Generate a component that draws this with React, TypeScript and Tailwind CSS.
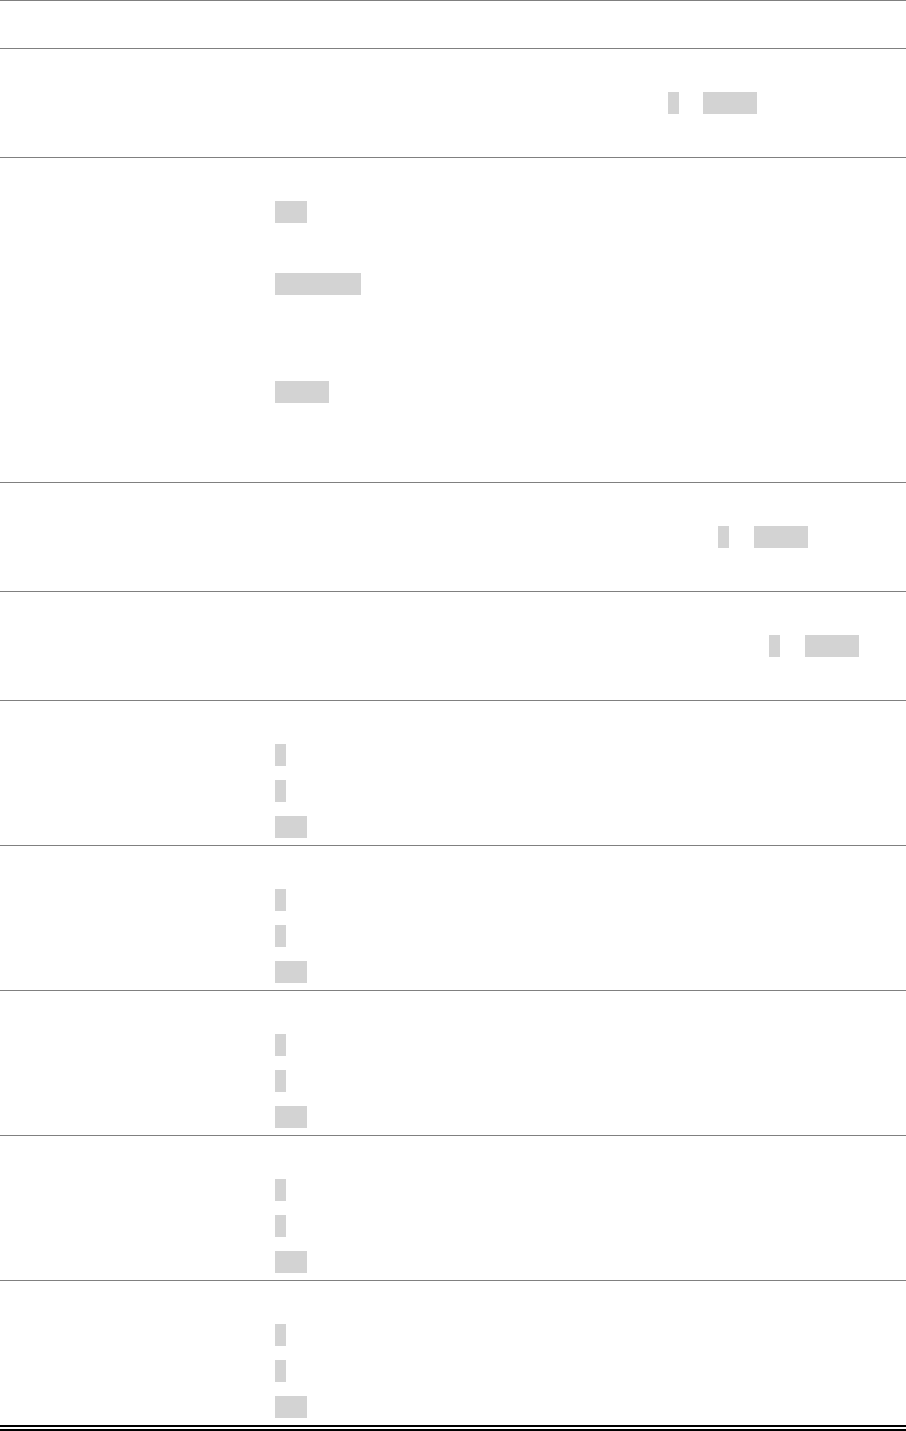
import React from 'react';

// Gray inline code chip; the glyphs inside are rendered transparent, as in the reference
function Chip({ text, width, offset = 0 }: { text: string; width: number; offset?: number }) {
  return (
    <code
      className="inline-block h-[22px] overflow-hidden bg-[#d3d3d3] text-[18px] leading-[22px] text-transparent"
      style={{ width, marginLeft: offset, fontFamily: '"Liberation Mono", monospace' }}
    >
      {text}
    </code>
  );
}

function Line({ children }: { children?: React.ReactNode }) {
  return <div className="flex h-9 items-center">{children}</div>;
}

function Row({ children, last = false }: { children: React.ReactNode; last?: boolean }) {
  return (
    <div
      className={`flex border-t border-[#808080] ${last ? 'border-b-[6px] border-b-black border-double' : ''}`}
    >
      <div className="w-[275px] shrink-0" />
      <div className="flex flex-1 flex-col">{children}</div>
    </div>
  );
}

// Rows 6..10 share the same shape: a blank line, then two one-char chips and a three-char chip
function TripleRow({ last = false }: { last?: boolean }) {
  return (
    <Row last={last}>
      <Line />
      <Line>
        <Chip text="0" width={11} />
      </Line>
      <Line>
        <Chip text="1" width={11} />
      </Line>
      <Line>
        <Chip text="int" width={32} />
      </Line>
    </Row>
  );
}

export default function App() {
  return (
    <div className="min-h-[1431px] w-full bg-white" style={{ fontFamily: '"Liberation Serif", serif' }}>
      <Row>
        <div className="h-[47px]" />
      </Row>

      <Row>
        <Line />
        <Line>
          <Chip text="0" width={11} offset={393} />
          <Chip text="false" width={54} offset={24} />
        </Line>
        <Line />
      </Row>

      <Row>
        <Line />
        <Line>
          <Chip text="int" width={32} />
        </Line>
        <Line />
        <Line>
          <Chip text="unsigned" width={86} />
        </Line>
        <Line />
        <Line />
        <Line>
          <Chip text="float" width={54} />
        </Line>
        <Line />
        <Line />
      </Row>

      <Row>
        <Line />
        <Line>
          <Chip text="0" width={11} offset={443} />
          <Chip text="false" width={54} offset={25} />
        </Line>
        <Line />
      </Row>

      <Row>
        <Line />
        <Line>
          <Chip text="0" width={11} offset={494} />
          <Chip text="false" width={54} offset={25} />
        </Line>
        <Line />
      </Row>

      <TripleRow />
      <TripleRow />
      <TripleRow />
      <TripleRow />
      <TripleRow last />
    </div>
  );
}
